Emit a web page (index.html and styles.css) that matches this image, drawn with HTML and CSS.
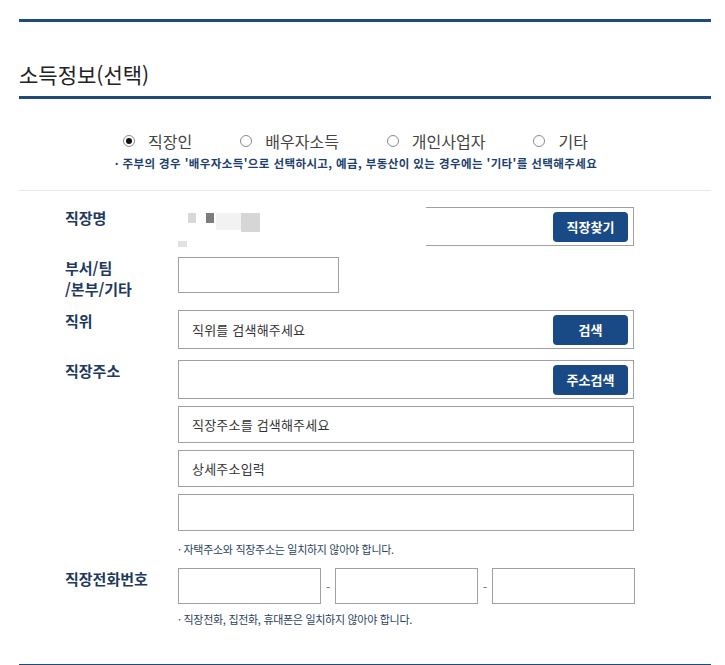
FILE: index.html
```html
<!DOCTYPE html>
<html lang="ko">
<head>
    <meta charset="UTF-8">
    <meta name="viewport" content="width=device-width, initial-scale=1.0">
    <title>소득정보(선택)</title>
    <link rel="stylesheet" href="styles.css">
</head>
<body>
    <div class="section">
        <h2 class="section-title">소득정보(선택)</h2>

        <div class="type-box">
            <div class="radio-group">
                <label class="radio-item"><span class="radio checked"></span>직장인</label>
                <label class="radio-item"><span class="radio"></span>배우자소득</label>
                <label class="radio-item"><span class="radio"></span>개인사업자</label>
                <label class="radio-item"><span class="radio"></span>기타</label>
            </div>
            <p class="type-note">· 주부의 경우 '배우자소득'으로 선택하시고, 예금, 부동산이 있는 경우에는 '기타'를 선택해주세요</p>
        </div>

        <div class="form">
            <div class="form-row">
                <div class="form-label">직장명</div>
                <div class="form-field">
                    <div class="box box-btn">
                        <div class="masked">
                            <span class="px px1"></span>
                            <span class="px px2"></span>
                            <span class="px px3"></span>
                            <span class="px px4"></span>
                            <span class="px px5"></span>
                        </div>
                        <button class="btn">직장찾기</button>
                    </div>
                </div>
            </div>

            <div class="form-row">
                <div class="form-label">부서/팀<br>/본부/기타</div>
                <div class="form-field">
                    <div class="box box-short"></div>
                </div>
            </div>

            <div class="form-row">
                <div class="form-label">직위</div>
                <div class="form-field">
                    <div class="box box-btn">
                        <span class="placeholder">직위를 검색해주세요</span>
                        <button class="btn">검색</button>
                    </div>
                </div>
            </div>

            <div class="form-row">
                <div class="form-label">직장주소</div>
                <div class="form-field stack">
                    <div class="box box-btn">
                        <button class="btn">주소검색</button>
                    </div>
                    <div class="box"><span class="placeholder">직장주소를 검색해주세요</span></div>
                    <div class="box"><span class="placeholder">상세주소입력</span></div>
                    <div class="box"></div>
                    <p class="field-note">· 자택주소와 직장주소는 일치하지 않아야 합니다.</p>
                </div>
            </div>

            <div class="form-row">
                <div class="form-label">직장전화번호</div>
                <div class="form-field">
                    <div class="phone">
                        <div class="box box-phone"></div>
                        <span class="dash">-</span>
                        <div class="box box-phone"></div>
                        <span class="dash">-</span>
                        <div class="box box-phone"></div>
                    </div>
                    <p class="field-note note-phone">· 직장전화, 집전화, 휴대폰은 일치하지 않아야 합니다.</p>
                </div>
            </div>
        </div>
    </div>
</body>
</html>
```

FILE: styles.css
```css
body {
    margin: 0;
    background-color: #fff;
    font-family: "Noto Sans CJK KR", "Noto Sans", sans-serif;
    color: #333;
}

.section {
    margin: 19px 14px 0 19px;
    border-top: 3px solid #1f4b7a;
    border-bottom: 2px solid #1f4b7a;
}

.section-title {
    margin: 0;
    padding: 40px 0 10px;
    font-size: 21px;
    line-height: 24px;
    font-weight: normal;
    color: #222;
    border-bottom: 3px solid #1f4b7a;
}

.type-box {
    padding: 31px 0 19px;
    border-bottom: 1px solid #e8e8e8;
    text-align: center;
}

.radio-group {
    display: flex;
    justify-content: center;
    gap: 48px;
    margin-left: -19px;
}

.radio-item {
    display: flex;
    align-items: center;
    gap: 13px;
    font-size: 16px;
    line-height: 22px;
    color: #444;
}

.radio {
    width: 12px;
    height: 12px;
    border: 1px solid #8a8a8a;
    border-radius: 50%;
    box-sizing: border-box;
    display: flex;
    align-items: center;
    justify-content: center;
}

.radio.checked::after {
    content: "";
    width: 6px;
    height: 6px;
    border-radius: 50%;
    background-color: #111;
}

.type-note {
    margin: 3px 0 0 -18px;
    font-size: 11.5px;
    line-height: 16px;
    font-weight: bold;
    color: #1b3f6e;
    letter-spacing: 0.4px;
}

.form {
    padding: 16px 77px 37px 46px;
}

.form-row {
    display: flex;
    margin-bottom: 11px;
}

.form-row:last-child {
    margin-bottom: 0;
}

.form-label {
    width: 113px;
    flex-shrink: 0;
    font-size: 15px;
    line-height: 21px;
    font-weight: bold;
    color: #1e3a5f;
}

.form-field {
    flex: 1;
}

.stack {
    display: flex;
    flex-direction: column;
    gap: 7px;
}

.box {
    position: relative;
    height: 37px;
    border: 1px solid #a0a0a0;
    box-sizing: border-box;
    display: flex;
    align-items: center;
    padding: 0 5px 0 13px;
    background-color: #fff;
}

.box-btn {
    height: 39px;
    justify-content: space-between;
}

.box-btn .btn {
    margin-left: auto;
}

.box-short {
    width: 161px;
    height: 36px;
}

.placeholder {
    font-size: 13px;
    color: #333;
    letter-spacing: 0.2px;
}

.btn {
    background-color: #1a4a86;
    color: #fff;
    border: none;
    border-radius: 4px;
    width: 75px;
    height: 30px;
    font-family: inherit;
    font-size: 13px;
    font-weight: bold;
    padding: 0;
}

.field-note {
    margin: 3px 0 0;
    font-size: 11px;
    line-height: 16px;
    color: #2a3f5f;
    letter-spacing: -0.3px;
}

.phone {
    display: flex;
    align-items: center;
}

.box-phone {
    width: 143px;
    height: 36px;
}

.dash {
    width: 14px;
    text-align: center;
    font-size: 12px;
    color: #666;
}

.note-phone {
    margin-top: 7px;
}

/* 직장명 가림 처리 */
.masked {
    position: absolute;
    left: -1px;
    top: -4px;
    width: 248px;
    height: 44px;
    background-color: #fff;
}

.px {
    position: absolute;
    display: block;
}

.px1 { left: 10px; top: 9px; width: 8px; height: 10px; background-color: #d8d8d8; }
.px2 { left: 28px; top: 9px; width: 8px; height: 10px; background-color: #7c7c7c; }
.px3 { left: 38px; top: 9px; width: 25px; height: 17px; background-color: #f2f2f2; }
.px4 { left: 63px; top: 9px; width: 19px; height: 19px; background-color: #d6d6d6; }
.px5 { left: 0; top: 37px; width: 9px; height: 6px; background-color: #e2e2e2; }
```
